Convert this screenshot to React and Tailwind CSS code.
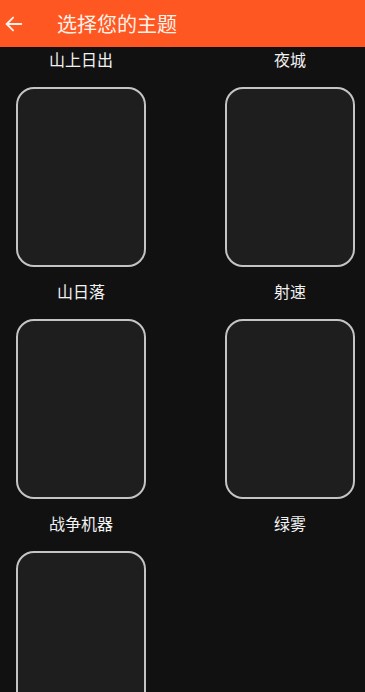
import React from "react";

const themes = ["山上日出", "夜城", "山日落", "射速", "战争机器", "绿雾"];

const ThemeCard = ({ name, showCard }) => (
  <div className="flex flex-col items-center w-[130px]">
    <div className="h-6 leading-[21px] text-[16px] text-[#f2f2f2] whitespace-nowrap">{name}</div>
    {showCard ? (
      <div className="mt-[14px] mb-[14px] w-[130px] h-[180px] rounded-[18px] border-2 border-[#c4c4c4] bg-[#1e1e1e]" />
    ) : (
      <div className="mt-[14px] mb-[14px] w-[130px] h-[180px]" />
    )}
  </div>
);

export default function App() {
  const rows = [];
  for (let i = 0; i < themes.length; i += 2) {
    rows.push([themes[i], themes[i + 1]]);
  }

  return (
    <div
      className="w-[365px] h-[692px] overflow-hidden bg-[#111111]"
      style={{ fontFamily: '"Noto Sans CJK SC", "Noto Sans", sans-serif' }}
    >
      {/* Header */}
      <header className="h-[47px] bg-[#ff5722] flex items-center">
        <button className="w-[27px] pl-[3px] flex items-center text-[#fdf2ea]">
          <svg width="22" height="22" viewBox="0 0 24 24" fill="none" stroke="currentColor" strokeWidth="2" strokeLinecap="round" strokeLinejoin="round">
            <path d="M20 12H4" />
            <path d="M11 5l-7 7 7 7" />
          </svg>
        </button>
        <h1 className="ml-[30px] text-[20px] text-[#fdf2ea] leading-none">选择您的主题</h1>
      </header>

      {/* Theme grid */}
      <div className="pt-[2px]">
        {rows.map((row, idx) => (
          <div key={idx} className="flex justify-between pl-[16px] pr-[10px]">
            <ThemeCard name={row[0]} showCard />
            <ThemeCard name={row[1]} showCard={idx < 2} />
          </div>
        ))}
      </div>
    </div>
  );
}
